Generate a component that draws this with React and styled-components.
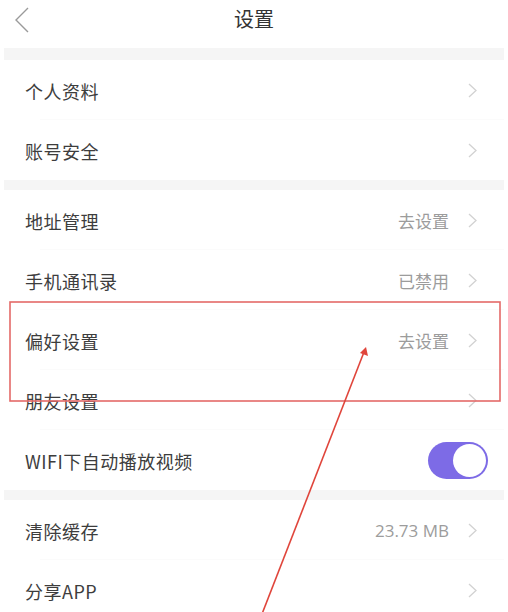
import React from "react";
import styled, { createGlobalStyle } from "styled-components";

const GlobalStyle = createGlobalStyle`
  html, body {
    margin: 0;
    padding: 0;
    background: #fff;
  }
  body {
    font-family: "Noto Sans CJK SC", "Noto Sans", sans-serif;
  }
`;

const groups = [
  [
    { label: "个人资料" },
    { label: "账号安全" },
  ],
  [
    { label: "地址管理", value: "去设置" },
    { label: "手机通讯录", value: "已禁用" },
    { label: "偏好设置", value: "去设置" },
    { label: "朋友设置" },
    { label: "WIFI下自动播放视频", toggle: true },
  ],
  [
    { label: "清除缓存", value: "23.73 MB" },
    { label: "分享APP" },
  ],
];

const Chevron = ({ left }) => (
  <svg width={left ? 18 : 11} height={left ? 28 : 15} viewBox={left ? "0 0 18 28" : "0 0 11 15"} fill="none">
    {left ? (
      <path d="M15 2 L3 14 L15 26" stroke="#9a9a9a" strokeWidth="1.4" />
    ) : (
      <path d="M2 1 L9 7.5 L2 14" stroke="#d2d2d2" strokeWidth="1.3" />
    )}
  </svg>
);

const App = () => {
  return (
    <Page>
      <GlobalStyle />
      <Header>
        <Back>
          <Chevron left />
        </Back>
        <Title>设置</Title>
      </Header>
      {groups.map((rows, gi) => (
        <React.Fragment key={gi}>
          <Band first={gi === 0} />
          <Group>
            {rows.map((row, i) => (
              <Row key={row.label} last={i === rows.length - 1}>
                <Label>{row.label}</Label>
                <Right>
                  {row.toggle ? (
                    <Toggle>
                      <Knob />
                    </Toggle>
                  ) : (
                    <>
                      {row.value && <Value>{row.value}</Value>}
                      <Chevron />
                    </>
                  )}
                </Right>
              </Row>
            ))}
          </Group>
        </React.Fragment>
      ))}
      <Annotation width="508" height="612" viewBox="0 0 508 612">
        <rect x="10" y="302" width="490" height="99" fill="none" stroke="#e46a68" strokeWidth="1.6" />
        <line x1="262" y1="614" x2="364" y2="352" stroke="#e0453b" strokeWidth="1.6" />
        <path d="M360 353 L366 347 L368 356 Z" fill="#e0453b" />
      </Annotation>
    </Page>
  );
};

export default App;

const Page = styled.div`
  position: relative;
  width: 508px;
  height: 612px;
  overflow: hidden;
  background: #fff;
`;

const Header = styled.div`
  position: relative;
  height: 48px;
  display: flex;
  align-items: flex-start;
  justify-content: center;
`;

const Back = styled.div`
  position: absolute;
  left: 13px;
  top: 6px;
  display: flex;
`;

const Title = styled.div`
  font-size: 20px;
  line-height: 38px;
  color: #333;
`;

const Band = styled.div`
  height: ${(p) => (p.first ? "12px" : "10px")};
  margin: 0 4px;
  background: #f5f5f5;
`;

const Group = styled.div`
  display: flex;
  flex-direction: column;
`;

const Row = styled.div`
  height: 60px;
  display: flex;
  align-items: center;
  justify-content: space-between;
  padding: 0 30px 0 25px;
  position: relative;
  &::after {
    content: "";
    display: ${(p) => (p.last ? "none" : "block")};
    position: absolute;
    left: 40px;
    right: 4px;
    bottom: 0;
    height: 1px;
    background: #fbfbfb;
  }
`;

const Label = styled.div`
  font-size: 18px;
  color: #3d3d3d;
  letter-spacing: 0.5px;
  padding-top: 1px;
`;

const Right = styled.div`
  display: flex;
  align-items: center;
  gap: 18px;
`;

const Value = styled.div`
  font-family: "Open Sans", "Noto Sans CJK SC", sans-serif;
  font-size: 17px;
  color: #9c9c9c;
  padding-top: 1px;
`;

const Toggle = styled.div`
  width: 60px;
  height: 37px;
  border-radius: 19px;
  background: #7d6be6;
  display: flex;
  align-items: center;
  justify-content: flex-end;
  padding: 0 2px;
  box-sizing: border-box;
  margin-right: -10px;
`;

const Knob = styled.div`
  width: 33px;
  height: 33px;
  border-radius: 50%;
  background: #fff;
`;

const Annotation = styled.svg`
  position: absolute;
  left: 0;
  top: 0;
  pointer-events: none;
`;
